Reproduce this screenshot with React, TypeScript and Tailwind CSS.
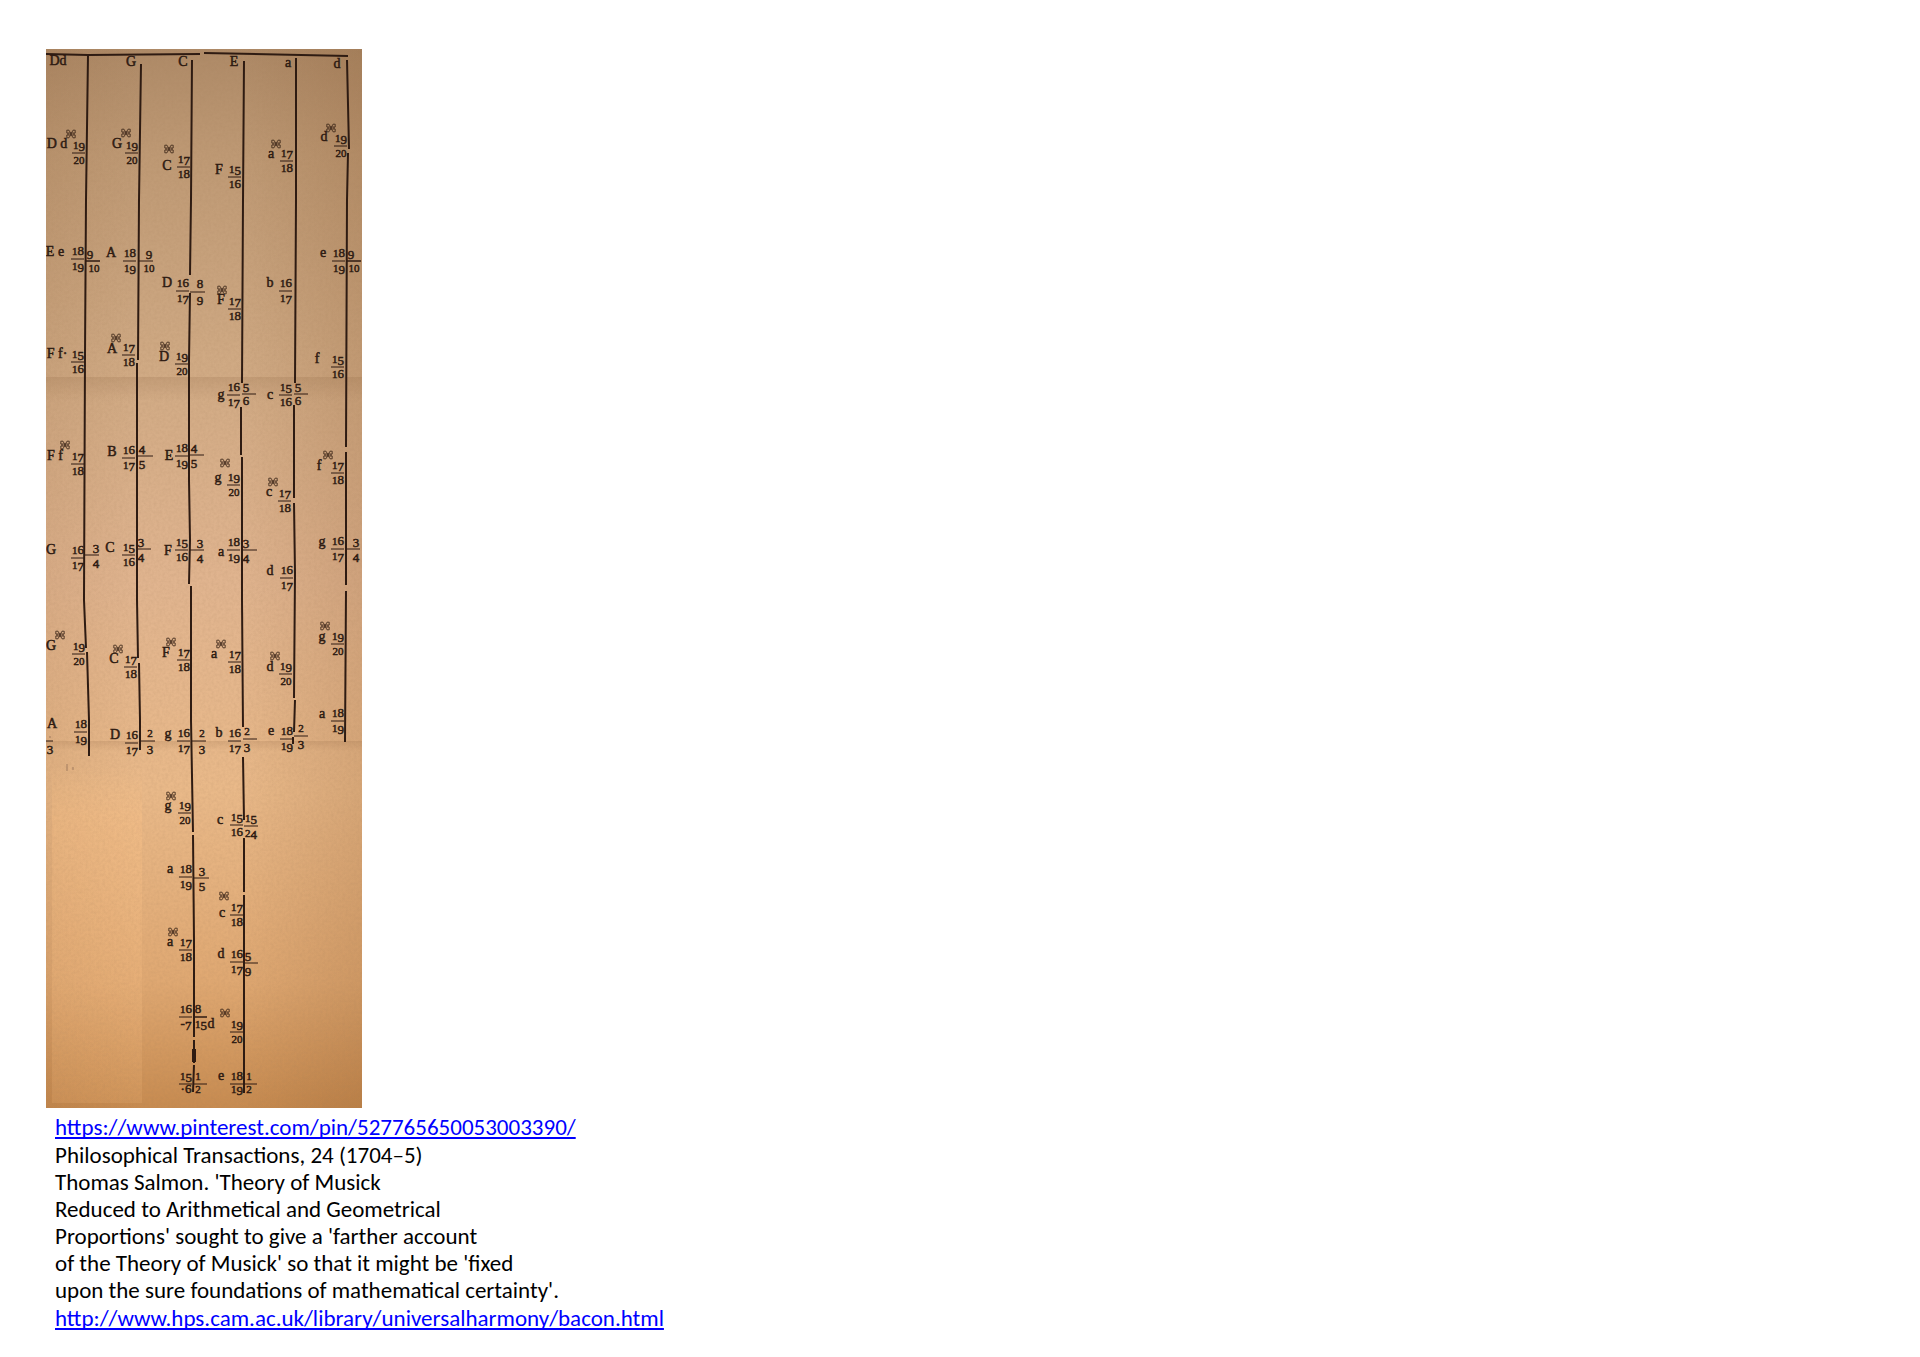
import React from "react";

type Frac = [n: string, d: string, x: number, y: number, x1?: number, x2?: number];
type Mark = { t?: string; x?: number; y?: number; s?: [number, number]; f?: Frac[] };

const marks: Mark[] = [
  { t: "Dd", x: 58, y: 65 }, { t: "G", x: 131, y: 66 }, { t: "C", x: 183, y: 66 },
  { t: "E", x: 234, y: 66 }, { t: "a", x: 288, y: 67 }, { t: "d", x: 337, y: 68 },

  { t: "D d", x: 57, y: 148, s: [71, 134], f: [["19", "20", 79, 153]] },
  { t: "G", x: 117, y: 148, s: [126, 133], f: [["19", "20", 132, 153]] },
  { t: "C", x: 167, y: 170, s: [169, 149], f: [["17", "18", 184, 167]] },
  { t: "F", x: 219, y: 174, f: [["15", "16", 235, 177]] },
  { t: "a", x: 271, y: 158, s: [276, 144], f: [["17", "18", 287, 161]] },
  { t: "d", x: 324, y: 141, s: [331, 128], f: [["19", "20", 341, 146]] },

  { t: "E e", x: 55, y: 256, f: [["18", "19", 78, 259], ["9", "", 90, 261, 86, 100], ["", "10", 94, 261, 86, 100]] },
  { t: "A", x: 111, y: 257, f: [["18", "19", 130, 261], ["9", "10", 149, 261, 138, 153]] },
  { t: "D", x: 167, y: 287, f: [["16", "17", 183, 291], ["8", "9", 200, 292, 190, 205]] },
  { t: "F", x: 221, y: 304, s: [222, 290], f: [["17", "18", 235, 309]] },
  { t: "b", x: 270, y: 287, f: [["16", "17", 286, 291]] },
  { t: "e", x: 323, y: 257, f: [["18", "19", 339, 261], ["9", "", 351, 261, 347, 361], ["", "10", 354, 261, 347, 361]] },

  { t: "F f·", x: 57, y: 358, f: [["15", "16", 78, 362]] },
  { t: "A", x: 112, y: 353, s: [116, 338], f: [["17", "18", 129, 355]] },
  { t: "D", x: 164, y: 361, s: [165, 346], f: [["19", "20", 182, 364]] },
  { t: "g", x: 221, y: 399, f: [["16", "17", 234, 395], ["5", "6", 246, 394, 242, 256]] },
  { t: "c", x: 270, y: 399, f: [["15", "16", 286, 395], ["5", "6", 298, 394, 294, 308]] },
  { t: "f", x: 317, y: 363, f: [["15", "16", 338, 367]] },

  { t: "F f", x: 55, y: 460, s: [65, 445], f: [["17", "18", 78, 464]] },
  { t: "B", x: 112, y: 456, f: [["16", "17", 129, 458], ["4", "5", 142, 456, 137, 153]] },
  { t: "E", x: 169, y: 460, f: [["18", "19", 182, 456], ["4", "5", 194, 455, 189, 204]] },
  { t: "g", x: 218, y: 482, s: [225, 463], f: [["19", "20", 234, 485]] },
  { t: "c", x: 269, y: 496, s: [273, 482], f: [["17", "18", 285, 501]] },
  { t: "f", x: 319, y: 470, s: [328, 455], f: [["17", "18", 338, 473]] },

  { t: "G", x: 51, y: 554, f: [["16", "17", 78, 558], ["3", "4", 96, 555, 85, 99]] },
  { t: "C", x: 110, y: 552, f: [["15", "16", 129, 555], ["3", "4", 141, 549, 137, 151]] },
  { t: "F", x: 168, y: 555, f: [["15", "16", 182, 550], ["3", "4", 200, 550, 190, 204]] },
  { t: "a", x: 221, y: 556, f: [["18", "19", 234, 550], ["3", "4", 246, 550, 242, 257]] },
  { t: "d", x: 270, y: 575, f: [["16", "17", 287, 578]] },
  { t: "g", x: 322, y: 546, f: [["16", "17", 338, 549], ["3", "4", 356, 549, 346, 360]] },

  { t: "G", x: 51, y: 650, s: [60, 635], f: [["19", "20", 79, 654]] },
  { t: "C", x: 114, y: 663, s: [118, 649], f: [["17", "18", 131, 667]] },
  { t: "F", x: 166, y: 657, s: [171, 642], f: [["17", "18", 184, 660]] },
  { t: "a", x: 214, y: 658, s: [221, 644], f: [["17", "18", 235, 662]] },
  { t: "d", x: 270, y: 671, s: [275, 656], f: [["19", "20", 286, 674]] },
  { t: "g", x: 322, y: 641, s: [325, 626], f: [["19", "20", 338, 644]] },

  { t: "a", x: 322, y: 718, f: [["18", "19", 338, 721]] },
  { t: "A", x: 52, y: 728, f: [["18", "19", 81, 732], ["", "3", 50, 741, 46, 53]] },
  { t: "D", x: 115, y: 739, f: [["16", "17", 132, 743], ["2", "3", 150, 741, 140, 155]] },
  { t: "g", x: 168, y: 738, f: [["16", "17", 184, 741], ["2", "3", 202, 741, 191, 206]] },
  { t: "b", x: 219, y: 737, f: [["16", "17", 235, 741], ["2", "3", 247, 739, 243, 257]] },
  { t: "e", x: 271, y: 735, f: [["18", "19", 287, 739], ["2", "3", 301, 736, 294, 308]] },

  { t: "g", x: 168, y: 810, s: [171, 796], f: [["19", "20", 185, 813]] },
  { t: "c", x: 220, y: 824, f: [["15", "16", 237, 825], ["15", "24", 251, 826, 244, 258]] },
  { t: "a", x: 170, y: 873, f: [["18", "19", 186, 877], ["3", "5", 202, 878, 194, 209]] },
  { t: "c", x: 222, y: 917, s: [224, 896], f: [["17", "18", 237, 915]] },
  { t: "a", x: 170, y: 946, s: [173, 932], f: [["17", "18", 186, 950]] },
  { t: "d", x: 221, y: 958, f: [["16", "17", 237, 962], ["5", "9", 248, 963, 244, 258]] },
  { t: "d", x: 211, y: 1028, f: [["16", "-7", 186, 1017], ["8", "", 198, 1017, 193, 207], ["", "15", 201, 1017, 193, 207]] },
  { s: [225, 1013], f: [["19", "20", 237, 1032]] },
  { f: [["15", "·6", 186, 1084], ["1", "2", 198, 1084, 193, 207]] },
  { t: "e", x: 221, y: 1080, f: [["18", "19", 237, 1084], ["1", "2", 249, 1084, 244, 257]] },
];

const strings = [
  "M88 55L86 200L85 355L84 600L86 648M87 652L89 720L89 756",
  "M141 64L139 200L138 360M137 363L137 600L138 658M139 663L140 720L140 750",
  "M192 60L191 200L190 275M190 293L189 360L189 480L190 540L189 584M191 586L191 720L193 832M193 835L194 940L194 1037M194 1065L193 1092",
  "M244 61L243 200L242 383M241 407L241 455M242 457L242 600L243 727M243 757L244 820M244 838L244 892M244 895L244 1093",
  "M296 58L296 200L295 383M294 405L294 498M294 503L295 573L294 698M295 700L294 732M293 737L293 744",
  "M347 60L349 149M348 153L347 200L346 447M346 452L346 585M346 591L345 742",
];

const descends = (c: string) => "34579".includes(c);
const isSmall = (c: string) => "012".includes(c);

/** Old-style figures: 0, 1 and 2 stay at x-height, 3, 4, 5, 7 and 9 hang below the line. */
function Figures({ v, x, y }: { v: string; x: number; y: number }) {
  let shift = 0;
  return (
    <text x={x} y={y} textAnchor="middle" fontSize="13">
      {v.split("").map((c, i) => {
        const want = descends(c) ? 2 : 0;
        const dy = want - shift;
        shift = want;
        return (
          <tspan key={i} dy={dy} fontSize={isSmall(c) ? 11 : 13}>
            {c}
          </tspan>
        );
      })}
    </text>
  );
}

function Sharp({ x, y }: { x: number; y: number }) {
  return (
    <g transform={`translate(${x} ${y})`} fill="none" stroke="#3a2416" strokeWidth="0.8">
      <path d="M-1 -1H-4.2V-3.8H-2L2 3.8H4.2V1H1M1 -1H4.2V-3.8H2L-2 3.8H-4.2V1H-1" />
      <path d="M-3 -1V1M3 -1V1M-1 -1H1M-1 1H1" />
    </g>
  );
}

function MonochordTable() {
  return (
    <svg viewBox="46 49 316 1059" className="block w-[316px] max-w-full" role="img" aria-label="Salmon's table of string divisions">
      <defs>
        <linearGradient id="paper" x1="0" y1="0" x2="0" y2="1">
          <stop offset="0" stopColor="#ae8a67" />
          <stop offset="0.1" stopColor="#be9974" />
          <stop offset="0.3" stopColor="#d0aa84" />
          <stop offset="0.5" stopColor="#e0b48f" />
          <stop offset="0.7" stopColor="#e9b989" />
          <stop offset="0.88" stopColor="#dfa872" />
          <stop offset="1" stopColor="#c78b50" />
        </linearGradient>
        <linearGradient id="side" x1="0" y1="0" x2="1" y2="0">
          <stop offset="0" stopColor="#6b3a10" stopOpacity="0.08" />
          <stop offset="0.3" stopColor="#6b3a10" stopOpacity="0" />
          <stop offset="0.6" stopColor="#6b3a10" stopOpacity="0" />
          <stop offset="1" stopColor="#6b3a10" stopOpacity="0.15" />
        </linearGradient>
        <linearGradient id="patch" x1="0" y1="0" x2="0" y2="1">
          <stop offset="0" stopColor="#ffc488" stopOpacity="0" />
          <stop offset="0.15" stopColor="#ffc488" stopOpacity="0.3" />
          <stop offset="1" stopColor="#ffc488" stopOpacity="0.15" />
        </linearGradient>
        <linearGradient id="fold" x1="0" y1="0" x2="0" y2="1">
          <stop offset="0" stopColor="#7a5230" stopOpacity="0.16" />
          <stop offset="1" stopColor="#7a5230" stopOpacity="0" />
        </linearGradient>
        <filter id="grain" x="0" y="0" width="1" height="1">
          <feTurbulence type="fractalNoise" baseFrequency="0.35" numOctaves="2" seed="4" />
          <feColorMatrix values="0 0 0 0 0.35  0 0 0 0 0.2  0 0 0 0 0.1  0.5 0 0 0 -0.17" />
        </filter>
      </defs>
      <rect x="46" y="49" width="316" height="1059" fill="url(#paper)" />
      <rect x="46" y="49" width="316" height="1059" fill="url(#side)" />
      <rect x="52" y="765" width="90" height="338" fill="url(#patch)" />
      <rect x="46" y="377" width="316" height="24" fill="url(#fold)" />
      <rect x="46" y="741" width="316" height="10" fill="url(#fold)" />
      <rect x="46" y="49" width="316" height="1059" filter="url(#grain)" opacity="0.5" />
      <g fill="none" stroke="#2e1b12" strokeWidth="2">
        <path d="M46 54L88 55L200 54M204 53L348 56" />
        {strings.map((d) => (
          <path key={d} d={d} />
        ))}
        <path d="M194 1040V1050M194 1060V1063" />
        <path d="M194 1049V1062" strokeWidth="4" />
      </g>
      <path d="M67 764v7M73 767v3M49 737h2" stroke="#7a5a48" strokeWidth="1" opacity="0.6" />
      <g fill="#2e1b12" stroke="#2e1b12" strokeWidth="0.5" fontFamily="'Liberation Serif', serif">
        {marks.map((m, i) => (
          <g key={i}>
            {m.t && (
              <text x={m.x} y={m.y} textAnchor="middle" fontSize="14">
                {m.t}
              </text>
            )}
            {m.s && <Sharp x={m.s[0]} y={m.s[1]} />}
            {m.f?.map(([n, d, x, y, x1 = x - 7, x2 = x + 6], k) => (
              <g key={k}>
                {n && <Figures v={n} x={x} y={y - 4} />}
                <path d={`M${x1} ${y}H${x2}`} strokeWidth="1" />
                {d && <Figures v={d} x={x} y={y + (y > 1080 ? 9 : 11)} />}
              </g>
            ))}
          </g>
        ))}
      </g>
    </svg>
  );
}

const lines = [
  "Philosophical Transactions, 24 (1704–5)",
  "Thomas Salmon. 'Theory of Musick",
  "Reduced to Arithmetical and Geometrical",
  "Proportions' sought to give a 'farther account",
  "of the Theory of Musick' so that it might be 'fixed",
  "upon the sure foundations of mathematical certainty'.",
];

const linkClass = "text-[#0000ff] underline [text-decoration-skip-ink:none]";

export default function App() {
  return (
    <main className="min-h-screen bg-white pl-[46px] pt-[49px] text-black">
      <figure>
        <MonochordTable />
        <figcaption className="flex flex-col items-start pl-[9px] pt-[6px] font-['Carlito','Lato',sans-serif] text-[23px] leading-[27px]">
          <a className={linkClass} href="https://www.pinterest.com/pin/527765650053003390/">
            https://www.pinterest.com/pin/527765650053003390/
          </a>
          <div className="py-px">
            {lines.map((l) => (
              <p key={l}>{l}</p>
            ))}
          </div>
          <a className={linkClass} href="http://www.hps.cam.ac.uk/library/universalharmony/bacon.html">
            http://www.hps.cam.ac.uk/library/universalharmony/bacon.html
          </a>
        </figcaption>
      </figure>
    </main>
  );
}
